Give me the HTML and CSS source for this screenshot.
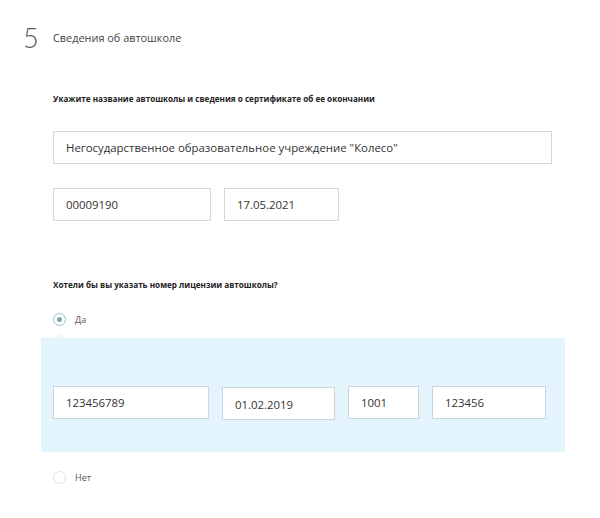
FILE: index.html
```html
<!DOCTYPE html>
<html>
    <head>
        <title>Сведения об автошколе</title>
        <link rel="stylesheet" href="styles.css">
    </head>
    <body>
        <div class="step">
            <div class="step-head">
                <span class="step-num">5</span>
                <span class="step-title">Сведения об автошколе</span>
            </div>

            <div class="question">Укажите название автошколы и сведения о сертификате об ее окончании</div>
            <div class="field field-full">Негосударственное образовательное учреждение "Колесо"</div>
            <div class="row row-cert">
                <div class="field w-num">00009190</div>
                <div class="field w-date">17.05.2021</div>
            </div>

            <div class="question question-license">Хотели бы вы указать номер лицензии автошколы?</div>
            <label class="radio">
                <span class="radio-dot checked"></span>
                <span>Да</span>
            </label>
            <div class="license">
                <div class="row">
                    <div class="field w-lic">123456789</div>
                    <div class="field w-ldate shift">01.02.2019</div>
                    <div class="field w-series">1001</div>
                    <div class="field w-reg">123456</div>
                </div>
            </div>
            <label class="radio radio-no">
                <span class="radio-dot"></span>
                <span>Нет</span>
            </label>
        </div>
    </body>
</html>
```

FILE: styles.css
```css
body{
    margin: 0;
    padding: 0;
    font-family: "Open Sans", Arial, sans-serif;
    color: #333;
    background: #fff;
}

.step{
    padding: 23px 0 0 53px;
}
.step-head{
    display: flex;
    align-items: center;
    margin-left: -30px;
    height: 28px;
}
.step-num{
    font-family: Lato, "Open Sans", sans-serif;
    font-weight: 300;
    font-size: 27px;
    color: #5a5a5a;
    width: 30px;
}
.step-title{
    font-size: 10.9px;
    color: #444;
}

.question{
    margin-top: 42px;
    font-size: 8.15px;
    font-weight: 700;
    color: #222;
}
.question-license{
    margin-top: 58px;
}

.field{
    box-sizing: border-box;
    height: 33px;
    padding: 0 12px;
    border: 1px solid #d6d6d6;
    background: #fff;
    font-size: 11.4px;
    line-height: 31px;
    color: #333;
}
.field-full{
    width: 499px;
    margin-top: 27px;
}

.row{
    display: flex;
    gap: 13px;
}
.row-cert{
    margin-top: 24px;
}
.w-num{ width: 158px; }
.w-date{ width: 115px; }

.radio{
    display: flex;
    align-items: center;
    gap: 9px;
    margin-top: 23px;
    font-size: 9px;
    color: #555;
}
.radio-dot{
    box-sizing: border-box;
    width: 13px;
    height: 13px;
    border: 1px solid #e2e2e2;
    border-radius: 50%;
    display: flex;
    justify-content: center;
    align-items: center;
}
.radio-dot.checked{
    border: 1.5px solid #9fc0c3;
}
.radio-dot.checked::after{
    content: "";
    width: 5px;
    height: 5px;
    border-radius: 50%;
    background: #7aa6aa;
}

.license{
    position: relative;
    margin: 12px 0 0 -12px;
    width: 524px;
    padding: 48px 12px 32px;
    box-sizing: border-box;
    background: #e3f4fc;
}
.license::before{
    content: "";
    position: absolute;
    top: -5px;
    left: 12px;
    border-left: 6px solid transparent;
    border-right: 6px solid transparent;
    border-bottom: 5px solid #eef8fd;
}
.license .field{
    border-color: #cad5dc;
}
.w-lic{ width: 156px; }
.w-ldate{ width: 113px; }
.w-series{ width: 71px; }
.w-reg{ width: 114px; }
.shift{
    margin-top: 1px;
    line-height: 33px;
}

.radio-no{
    margin-top: 19px;
}
```
